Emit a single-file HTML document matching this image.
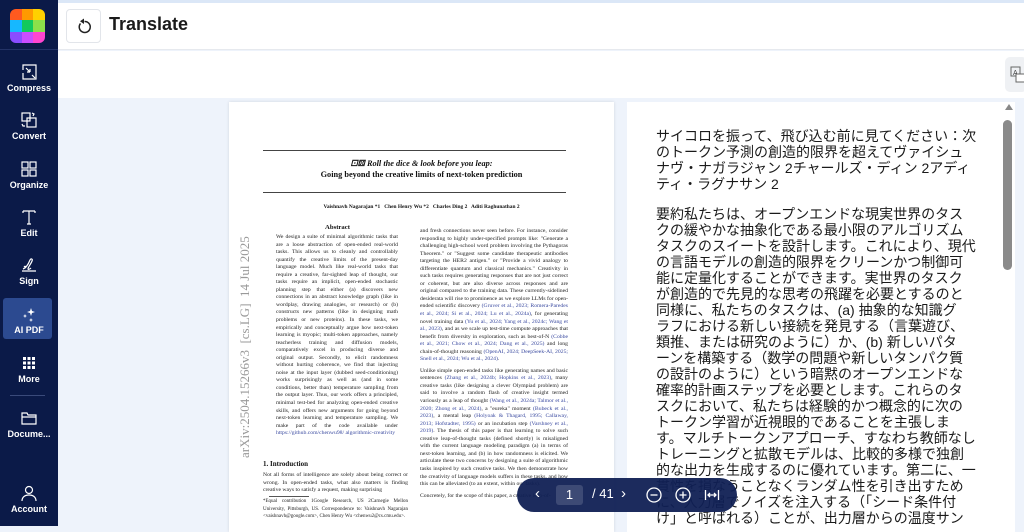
<!DOCTYPE html>
<html><head><meta charset="utf-8"><style>
*{margin:0;padding:0;box-sizing:border-box}
body{width:1024px;height:526px;overflow:hidden;background:#eef3fb;font-family:"Liberation Sans",sans-serif;position:relative}
.strip{position:absolute;left:0;top:0;width:1024px;height:3px;background:#dbe7f7}
.side{position:absolute;left:0;top:0;width:58px;height:526px;background:#0b1a48;color:#fff}
.logo{position:absolute;left:10px;top:9px;width:35px;height:34px;border-radius:6px;overflow:hidden;display:grid;grid-template-columns:1fr 1fr 1fr}
.it{position:absolute;left:0;width:58px;text-align:center;font-size:9px;font-weight:bold;color:#fff}
.it svg{display:block;margin:0 auto 2px}
.hdr{position:absolute;left:58px;top:3px;right:0;height:47px;background:#fff;border-bottom:1px solid #e6e9ee}
.back{position:absolute;left:8px;top:6px;width:35px;height:34px;border:1px solid #e2e5ea;border-radius:4px}
.ttl{position:absolute;left:51px;top:11px;font-size:18px;font-weight:bold;color:#1b1b1b}
.bar2{position:absolute;left:58px;top:51px;right:0;height:47px;background:#fff}
.tbtn{position:absolute;left:1005px;top:57px;width:22px;height:35px;background:#eff1f4;border-radius:5px}
.page{position:absolute;left:229px;top:102px;width:385px;height:430px;background:#fff;box-shadow:0 0 3px rgba(0,0,0,.12);font-family:"Liberation Serif",serif;color:#222}
.rule{position:absolute;left:34px;width:303px;height:1px;background:#444}
.col{position:absolute;font-size:5.7px;line-height:7.55px;text-align:justify;color:#222}
.trans{position:absolute;left:627px;top:102px;width:388px;height:430px;background:#fff}
.jp{position:absolute;left:29px;top:26px;width:342px;font-family:"Liberation Sans","Noto Sans CJK JP",sans-serif;font-size:14px;line-height:16px;color:#1a1a1a;white-space:nowrap}
.sb{position:absolute;left:1003px;top:120px;width:9px;height:150px;background:#8a8a8a;border-radius:5px}
.pill{position:absolute;left:517px;top:478px;width:220px;height:34px;background:rgba(16,32,84,.95);border-radius:17px;color:#fff}
.pill span{position:absolute;top:8px;font-size:13px}
</style></head><body>
<div class="strip"></div>
<div class="hdr"><div class="back"><svg width="35" height="34" viewBox="0 0 35 34"><path d="M13.5 13.5 A5.5 5.5 0 1 0 17.5 11.5" fill="none" stroke="#222" stroke-width="1.5"/><path d="M17 8.5 L17 14 L13 11.2Z" fill="#222"/></svg></div><div class="ttl">Translate</div></div>
<div class="bar2"></div>
<div class="tbtn"><svg width="22" height="35"><rect x="6" y="10" width="9" height="9" fill="none" stroke="#666"/><text x="8" y="18" font-size="7" fill="#444">A</text><rect x="11" y="17" width="9" height="8" fill="#fff" stroke="#666"/></svg></div>
<div class="side">
<div class="logo"><div style="background:#ff5a1f"></div><div style="background:#ff9a00"></div><div style="background:#ffd000"></div><div style="background:#16b8ff"></div><div style="background:#12c95d"></div><div style="background:#8ce04a"></div><div style="background:#8a4dff"></div><div style="background:#c94dff"></div><div style="background:#ff45d0"></div></div>
<div style="position:absolute;left:0;top:49px;width:58px;height:1px;background:#233366"></div>
<div class="it" style="top:63px"><svg width="18" height="18" viewBox="0 0 18 18" fill="none" stroke="#fff" stroke-width="1.2"><path d="M3 7V2h13v14H8"/><path d="M3 10v6h5"/><path d="M6 5l4 4M10 9H7M10 9V6"/><path d="M15 15l-3-3"/></svg>Compress</div>
<div class="it" style="top:111px"><svg width="18" height="18" viewBox="0 0 18 18" fill="none" stroke="#fff" stroke-width="1.2"><rect x="2" y="2" width="8" height="8"/><rect x="7" y="7" width="9" height="9"/><path d="M12 2l2 1-1 2"/><path d="M2 13l1 2h2"/></svg>Convert</div>
<div class="it" style="top:160px"><svg width="18" height="18" viewBox="0 0 18 18" fill="none" stroke="#fff" stroke-width="1.2"><rect x="2" y="2" width="6" height="6"/><rect x="10" y="2" width="6" height="6"/><rect x="2" y="10" width="6" height="6"/><rect x="10" y="10" width="6" height="6"/></svg>Organize</div>
<div class="it" style="top:208px"><svg width="18" height="18" viewBox="0 0 18 18" fill="none" stroke="#fff" stroke-width="1.2"><path d="M3 3h12M9 3v13M3 3v2M15 3v2M7 16h4"/></svg>Edit</div>
<div class="it" style="top:256px"><svg width="18" height="18" viewBox="0 0 18 18" fill="none" stroke="#fff" stroke-width="1.2"><path d="M3 13c3-1 5-4 7-9 1-2 3-1 2 1-1 3-4 6-4 8 0 1 2 0 3-1M2 15h14M4 10l2 2M6 10l-2 2"/></svg>Sign</div>
<div style="position:absolute;left:3px;top:298px;width:49px;height:41px;background:#2c4a90;border-radius:3px"></div>
<div class="it" style="top:305px"><svg width="18" height="18" viewBox="0 0 18 18" fill="#fff"><path d="M11 3l1 3 3 1-3 1-1 3-1-3-3-1 3-1z"/><path d="M5 9l.6 1.5L7 11l-1.4.5L5 13l-.6-1.5L3 11l1.4-.5z"/><path d="M11 13l.6 1.5 1.4.5-1.4.5-.6 1.5-.6-1.5-1.4-.5 1.4-.5z"/></svg>AI PDF</div>
<div class="it" style="top:354px"><svg width="18" height="18" viewBox="0 0 18 18" fill="#fff"><rect x="3" y="3" width="3" height="3"/><rect x="7.5" y="3" width="3" height="3"/><rect x="12" y="3" width="3" height="3"/><rect x="3" y="7.5" width="3" height="3"/><rect x="7.5" y="7.5" width="3" height="3"/><rect x="12" y="7.5" width="3" height="3"/><rect x="3" y="12" width="3" height="3"/><rect x="7.5" y="12" width="3" height="3"/><rect x="12" y="12" width="3" height="3"/></svg>More</div>
<div style="position:absolute;left:10px;top:395px;width:35px;height:1px;background:#3a4a7a"></div>
<div class="it" style="top:409px;font-size:9px"><svg width="18" height="18" viewBox="0 0 18 18" fill="none" stroke="#fff" stroke-width="1.2"><path d="M2 4h5l1 2h8v9H2z M2 8h14"/></svg>Docume...</div>
<div class="it" style="top:484px"><svg width="18" height="18" viewBox="0 0 18 18" fill="none" stroke="#fff" stroke-width="1.2"><circle cx="9" cy="6" r="3.5"/><path d="M2 17c0-4 3-6 7-6s7 2 7 6"/></svg>Account</div>
</div>
<div class="page">
<div class="rule" style="top:48px"></div>
<div style="position:absolute;left:0;width:385px;top:56px;text-align:center;font-size:8.3px;font-weight:bold;line-height:11px;color:#111"><i>⚀⚄ Roll the dice &amp; look before you leap:</i><br>Going beyond the creative limits of next-token prediction</div>
<div class="rule" style="top:90px"></div>
<div style="position:absolute;left:0;width:385px;top:102px;text-align:center;font-size:5.4px;font-weight:bold;color:#111">Vaishnavh Nagarajan *1 &nbsp; Chen Henry Wu *2 &nbsp; Charles Ding 2 &nbsp; Aditi Raghunathan 2</div>
<div style="position:absolute;transform:rotate(-90deg);transform-origin:0 0;font-size:13px;color:#999;white-space:nowrap;left:8px;top:356px">arXiv:2504.15266v3 &nbsp;[cs.LG] &nbsp;14 Jul 2025</div>
<div style="position:absolute;left:47px;width:123px;top:122px;text-align:center;font-size:6.7px;font-weight:bold;color:#111">Abstract</div>
<div class="col" style="left:47px;width:122px;top:132px">We design a suite of minimal algorithmic tasks that are a loose abstraction of open-ended real-world tasks. This allows us to cleanly and controllably quantify the creative limits of the present-day language model. Much like real-world tasks that require a creative, far-sighted leap of thought, our tasks require an implicit, open-ended stochastic planning step that either (a) discovers new connections in an abstract knowledge graph (like in wordplay, drawing analogies, or research) or (b) constructs new patterns (like in designing math problems or new proteins). In these tasks, we empirically and conceptually argue how next-token learning is myopic; multi-token approaches, namely teacherless training and diffusion models, comparatively excel in producing diverse and original output. Secondly, to elicit randomness without hurting coherence, we find that injecting noise at the input layer (dubbed seed-conditioning) works surprisingly as well as (and in some conditions, better than) temperature sampling from the output layer. Thus, our work offers a principled, minimal test-bed for analyzing open-ended creative skills, and offers new arguments for going beyond next-token learning and temperature sampling. We make part of the code available under <span style="color:#3a4aa0">https://github.com/chenwu98/ algorithmic-creativity</span></div>
<div style="position:absolute;left:34px;top:358px;font-size:7px;font-weight:bold;color:#111">1. Introduction</div>
<div class="col" style="left:34px;width:145px;top:370px">Not all forms of intelligence are solely about being correct or wrong. In open-ended tasks, what also matters is finding creative ways to satisfy a request, making surprising</div>
<div style="position:absolute;left:40px;top:394px;width:40px;height:1px;background:#555"></div>
<div class="col" style="left:34px;width:145px;top:396px;font-size:5px">*Equal contribution 1Google Research, US 2Carnegie Mellon University, Pittsburgh, US. Correspondence to: Vaishnavh Nagarajan &lt;vaishnavh@google.com&gt;, Chen Henry Wu &lt;chenwu2@cs.cmu.edu&gt;.</div>
<div class="col" style="left:191px;width:148px;top:126px">and fresh connections never seen before. For instance, consider responding to highly under-specified prompts like: "Generate a challenging high-school word problem involving the Pythagoras Theorem." or "Suggest some candidate therapeutic antibodies targeting the HER2 antigen." or "Provide a vivid analogy to differentiate quantum and classical mechanics." Creativity in such tasks requires generating responses that are not just correct or coherent, but are also diverse across responses and are original compared to the training data. These currently-sidelined desiderata will rise to prominence as we explore LLMs for open-ended scientific discovery <span style="color:#3a4aa0">(Gruver et al., 2023; Romera-Paredes et al., 2024; Si et al., 2024; Lu et al., 2024a)</span>, for generating novel training data <span style="color:#3a4aa0">(Yu et al., 2024; Yang et al., 2024c; Wang et al., 2023)</span>, and as we scale up test-time compute approaches that benefit from diversity in exploration, such as best-of-N <span style="color:#3a4aa0">(Cobbe et al., 2021; Chow et al., 2024; Dang et al., 2025)</span> and long chain-of-thought reasoning <span style="color:#3a4aa0">(OpenAI, 2024; DeepSeek-AI, 2025; Snell et al., 2024; Wu et al., 2024)</span>.<br><span style="display:block;height:4px"></span>Unlike simple open-ended tasks like generating names and basic sentences <span style="color:#3a4aa0">(Zhang et al., 2024b; Hopkins et al., 2023)</span>, many creative tasks (like designing a clever Olympiad problem) are said to involve a random flash of creative insight termed variously as a leap of thought <span style="color:#3a4aa0">(Wang et al., 2024a; Talmor et al., 2020; Zhong et al., 2024)</span>, a "eureka" moment <span style="color:#3a4aa0">(Bubeck et al., 2023)</span>, a mental leap <span style="color:#3a4aa0">(Holyoak &amp; Thagard, 1995; Callaway, 2013; Hofstadter, 1995)</span> or an incubation step <span style="color:#3a4aa0">(Varshney et al., 2019)</span>. The thesis of this paper is that learning to solve such creative leap-of-thought tasks (defined shortly) is misaligned with the current language modeling paradigm (a) in terms of next-token learning, and (b) in how randomness is elicited. We articulate these two concerns by designing a suite of algorithmic tasks inspired by such creative tasks. We then demonstrate how the creativity of language models suffers in these tasks, and how this can be alleviated (to an extent, within our tasks).<br><span style="display:block;height:4px"></span>Concretely, for the scope of this paper, a creative leap-of-</div>
</div>
<div class="trans"><div class="jp">サイコロを振って、飛び込む前に見てください：次<br>のトークン予測の創造的限界を超えてヴァイシュ<br>ナヴ・ナガラジャン 2チャールズ・ディン 2アディ<br>ティ・ラグナサン 2<div style="height:14px"></div>要約私たちは、オープンエンドな現実世界のタス<br>クの緩やかな抽象化である最小限のアルゴリズム<br>タスクのスイートを設計します。これにより、現代<br>の言語モデルの創造的限界をクリーンかつ制御可<br>能に定量化することができます。実世界のタスク<br>が創造的で先見的な思考の飛躍を必要とするのと<br>同様に、私たちのタスクは、(a) 抽象的な知識グ<br>ラフにおける新しい接続を発見する（言葉遊び、<br>類推、または研究のように）か、(b) 新しいパタ<br>ーンを構築する（数学の問題や新しいタンパク質<br>の設計のように）という暗黙のオープンエンドな<br>確率的計画ステップを必要とします。これらのタ<br>スクにおいて、私たちは経験的かつ概念的に次の<br>トークン学習が近視眼的であることを主張しま<br>す。マルチトークンアプローチ、すなわち教師なし<br>トレーニングと拡散モデルは、比較的多様で独創<br>的な出力を生成するのに優れています。第二に、一<br>貫性を損なうことなくランダム性を引き出すため<br>に、入力層でノイズを注入する（「シード条件付<br>け」と呼ばれる）ことが、出力層からの温度サン</div></div>
<div style="position:absolute;left:1005px;top:104px;width:0;height:0;border-left:4px solid transparent;border-right:4px solid transparent;border-bottom:6px solid #888"></div>
<div class="sb"></div>
<div class="pill">
<span style="left:18px;top:7px;font-size:15px">‹</span>
<div style="position:absolute;left:39px;top:7px;width:27px;height:20px;background:rgba(255,255,255,.15);border-radius:3px;text-align:center;font-size:13px;line-height:20px">1</div>
<span style="left:75px">/ 41</span>
<span style="left:104px;top:7px;font-size:15px">›</span>
<svg style="position:absolute;left:129px;top:9px" width="16" height="16" fill="none" stroke="#fff" stroke-width="1.3"><circle cx="8" cy="8" r="7"/><path d="M4.5 8h7"/></svg>
<svg style="position:absolute;left:158px;top:9px" width="16" height="16" fill="none" stroke="#fff" stroke-width="1.3"><circle cx="8" cy="8" r="7"/><path d="M4.5 8h7M8 4.5v7"/></svg>
<svg style="position:absolute;left:187px;top:10px" width="16" height="14" fill="none" stroke="#fff" stroke-width="1.3"><path d="M1.5 2v10M14.5 2v10M4 7h8M6 5l-2 2 2 2M10 5l2 2-2 2"/></svg>
</div>
</body></html>
